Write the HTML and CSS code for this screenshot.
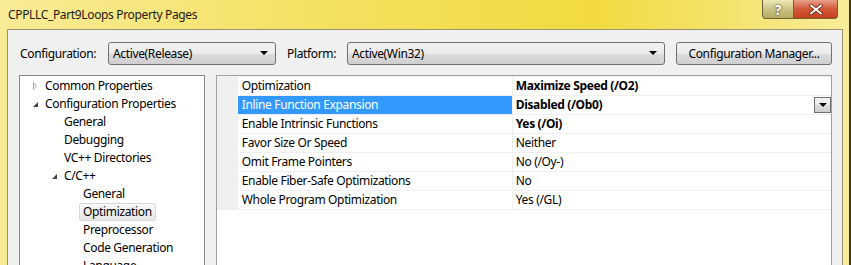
FILE: index.html
```html
<!DOCTYPE html>
<html lang="en">
<head>
    <meta charset="UTF-8">
    <title>CPPLLC_Part9Loops Property Pages</title>
    <link rel="stylesheet" href="styles.css">
</head>
<body>

<div class="window">
    <div class="titlebar">
        <span class="title">CPPLLC_Part9Loops Property Pages</span>
        <div class="caption-btns">
            <div class="cap-help">?</div>
            <div class="cap-close">
                <svg width="14" height="11" viewBox="0 0 14 11">
                    <path d="M2 1.5 L12 9.5 M12 1.5 L2 9.5" stroke="#5a2010" stroke-width="3.4" stroke-linecap="square"/>
                    <path d="M2 1.5 L12 9.5 M12 1.5 L2 9.5" stroke="#ffffff" stroke-width="1.8" stroke-linecap="square"/>
                </svg>
            </div>
        </div>
    </div>

    <div class="client">
        <div class="toolbar">
            <label class="lbl lbl-config">Configuration:</label>
            <div class="combo combo-config">
                <span>Active(Release)</span>
                <span class="arrow"></span>
            </div>
            <label class="lbl lbl-platform">Platform:</label>
            <div class="combo combo-platform">
                <span>Active(Win32)</span>
                <span class="arrow"></span>
            </div>
            <div class="button">Configuration Manager...</div>
        </div>

        <div class="panes">
            <div class="tree">
                <div class="node lvl0"><span class="tri closed"></span>Common Properties</div>
                <div class="node lvl0"><span class="tri open"></span>Configuration Properties</div>
                <div class="node lvl1"><span class="tri"></span>General</div>
                <div class="node lvl1"><span class="tri"></span>Debugging</div>
                <div class="node lvl1"><span class="tri"></span>VC++ Directories</div>
                <div class="node lvl1"><span class="tri open"></span>C/C++</div>
                <div class="node lvl2"><span class="tri"></span>General</div>
                <div class="node lvl2"><span class="tri"></span><span class="sel">Optimization</span></div>
                <div class="node lvl2"><span class="tri"></span>Preprocessor</div>
                <div class="node lvl2"><span class="tri"></span>Code Generation</div>
                <div class="node lvl2"><span class="tri"></span>Language</div>
            </div>

            <div class="grid">
                <div class="row">
                    <div class="margin"></div>
                    <div class="name">Optimization</div>
                    <div class="value bold">Maximize Speed (/O2)</div>
                </div>
                <div class="row">
                    <div class="margin"></div>
                    <div class="name selected">Inline Function Expansion</div>
                    <div class="value bold">Disabled (/Ob0)<span class="drop"><span class="arrow"></span></span></div>
                </div>
                <div class="row">
                    <div class="margin"></div>
                    <div class="name">Enable Intrinsic Functions</div>
                    <div class="value bold">Yes (/Oi)</div>
                </div>
                <div class="row">
                    <div class="margin"></div>
                    <div class="name">Favor Size Or Speed</div>
                    <div class="value">Neither</div>
                </div>
                <div class="row">
                    <div class="margin"></div>
                    <div class="name">Omit Frame Pointers</div>
                    <div class="value">No (/Oy-)</div>
                </div>
                <div class="row">
                    <div class="margin"></div>
                    <div class="name">Enable Fiber-Safe Optimizations</div>
                    <div class="value">No</div>
                </div>
                <div class="row last">
                    <div class="margin"></div>
                    <div class="name">Whole Program Optimization</div>
                    <div class="value">Yes (/GL)</div>
                </div>
            </div>
        </div>
    </div>
</div>

</body>
</html>
```

FILE: styles.css
```css
body {
    margin: 0;
    font-family: "Noto Sans", "Open Sans", sans-serif;
    font-size: 12px;
    letter-spacing: -0.35px;
    color: #000;
}
.window {
    width: 851px;
    height: 265px;
    overflow: hidden;
    box-sizing: border-box;
    border-right: 2px solid #3a3520;
    background: linear-gradient(90deg, #f8eb96 0%, #f4df58 45%, #f2da40 70%, #f6e57a 90%, #f9ed9c 100%);
}
.titlebar {
    height: 29px;
    display: flex;
    align-items: flex-start;
}
.title {
    margin: 6px 0 0 8px;
    font-size: 12px;
    color: #1c1c1c;
}
.caption-btns {
    margin-left: auto;
    margin-right: 11px;
    display: flex;
}
.cap-help, .cap-close {
    height: 19px;
    box-sizing: border-box;
    border: 1px solid #6b6436;
    border-top: none;
    display: flex;
    align-items: center;
    justify-content: center;
}
.cap-help {
    width: 31px;
    border-radius: 0 0 0 4px;
    border-right: none;
    background: linear-gradient(#ece8b8, #c9c080 55%, #b7ad62);
    color: #fff;
    font-weight: bold;
    font-size: 14px;
    text-shadow: 0 0 2px #4a4420, 0 0 1px #4a4420;
}
.cap-close {
    width: 45px;
    border-radius: 0 0 4px 0;
    background: linear-gradient(#e8a08a, #d2583a 50%, #c5401c);
}
.client {
    margin-left: 7px;
    width: 836px;
    height: 240px;
    box-sizing: border-box;
    border: 1px solid #9a9470;
    border-bottom: none;
    background: #f0f0f0;
    padding: 12px 10px 0 11px;
}
.toolbar {
    display: flex;
    align-items: center;
    height: 23px;
}
.lbl {
    box-sizing: border-box;
    padding-left: 1px;
    padding-bottom: 1px;
}
.lbl-config {
    width: 89px;
}
.lbl-platform {
    width: 71px;
    padding-left: 11px;
}
.combo, .button, .drop {
    box-sizing: border-box;
    border: 1px solid #707070;
    border-radius: 3px;
    background: linear-gradient(#f2f2f2 0%, #ebebeb 50%, #dddddd 51%, #cfcfcf 100%);
}
.combo {
    height: 23px;
    display: flex;
    align-items: center;
    padding: 0 7px 1px 4px;
}
.combo span:first-child {
    flex: 1;
}
.combo-config {
    width: 168px;
}
.combo-platform {
    width: 318px;
}
.arrow {
    width: 0;
    height: 0;
    border-left: 4px solid transparent;
    border-right: 4px solid transparent;
    border-top: 4px solid #000;
}
.button {
    margin-left: 11px;
    width: 156px;
    height: 23px;
    padding-bottom: 1px;
    display: flex;
    align-items: center;
    justify-content: center;
}
.panes {
    display: flex;
    margin-top: 10px;
    height: 200px;
}
.tree {
    width: 186px;
    box-sizing: border-box;
    border: 1px solid #828790;
    background: #fff;
    padding-top: 1px;
}
.node {
    height: 18px;
    box-sizing: border-box;
    padding-bottom: 2px;
    display: flex;
    align-items: center;
    white-space: nowrap;
}
.lvl0 { padding-left: 11px; }
.lvl1 { padding-left: 30px; }
.lvl2 { padding-left: 49px; }
.tri {
    width: 14px;
    height: 16px;
    flex-shrink: 0;
    position: relative;
}
.tri.closed::before {
    content: "";
    position: absolute;
    left: 2px;
    top: 5px;
    border-top: 4px solid transparent;
    border-bottom: 4px solid transparent;
    border-left: 4px solid #a6a6a6;
}
.tri.closed::after {
    content: "";
    position: absolute;
    left: 3px;
    top: 7px;
    border-top: 2px solid transparent;
    border-bottom: 2px solid transparent;
    border-left: 2px solid #fff;
}
.tri.open::before {
    content: "";
    position: absolute;
    left: 2px;
    top: 7px;
    border-left: 5px solid transparent;
    border-bottom: 5px solid #404040;
}
.sel {
    margin-left: -4px;
    margin-bottom: -2px;
    padding: 0 3px 1px;
    height: 18px;
    line-height: 15px;
    box-sizing: border-box;
    border: 1px solid #d9d9d9;
    border-radius: 2px;
    background: linear-gradient(#fafafa, #e6e6e6);
}
.grid {
    margin-left: 11px;
    width: 617px;
    box-sizing: border-box;
    border: 1px solid #a0a0a0;
    background: #fff;
}
.row {
    display: flex;
    height: 19px;
    box-sizing: border-box;
    border-top: 1px solid #f0f0f0;
}
.row.last {
    height: 20px;
    border-bottom: 1px solid #f0f0f0;
}
.margin {
    width: 21px;
    background: #f0f0f0;
}
.name {
    width: 275px;
    padding: 0 0 2px 4px;
    box-sizing: border-box;
    display: flex;
    align-items: center;
    border-right: 1px solid #f0f0f0;
    white-space: nowrap;
}
.name.selected {
    background: #3399ff;
    color: #fff;
}
.value {
    flex: 1;
    padding: 0 0 2px 3px;
    display: flex;
    align-items: center;
    white-space: nowrap;
}
.bold {
    font-weight: bold;
}
.drop {
    margin: 2px 0 0 auto;
    width: 17px;
    height: 16px;
    border-radius: 0;
    display: flex;
    align-items: center;
    justify-content: center;
}
```
